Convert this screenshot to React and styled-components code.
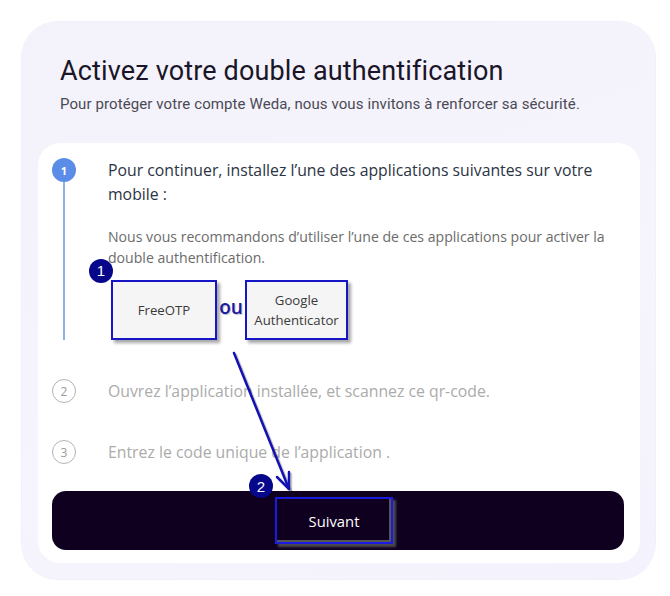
import styled, { createGlobalStyle } from "styled-components";

const GlobalStyle = createGlobalStyle`
  html, body {
    margin: 0;
    padding: 0;
    background: #ffffff;
  }
  * {
    box-sizing: border-box;
  }
`;

const Page = styled.div`
  position: relative;
  width: 670px;
  height: 596px;
  padding: 22px 0 0 22px;
  font-family: "Open Sans", "Liberation Sans", sans-serif;
`;

const Card = styled.div`
  width: 633px;
  padding: 0 15px 16px 16px;
  border-radius: 36px;
  background: linear-gradient(160deg, #f3f1f9 0%, #f6f4fc 60%, #f4f3fd 100%);
  box-shadow: 0 0 0 1px #f1effa;
`;

const Header = styled.div`
  padding: 31px 0 26px 22px;
`;

const Title = styled.h1`
  margin: 0;
  font-family: Roboto, "Liberation Sans", sans-serif;
  font-weight: 400;
  font-size: 27px;
  line-height: 36px;
  letter-spacing: 0.15px;
  color: #1a1528;
`;

const Subtitle = styled.p`
  margin: 2px 0 0;
  font-family: Roboto, "Liberation Sans", sans-serif;
  font-size: 15px;
  line-height: 26px;
  letter-spacing: 0.1px;
  color: #4a4a55;
`;

const Panel = styled.div`
  background: #ffffff;
  border-radius: 22px;
  padding: 15px 16px 13px 14px;
`;

const Step = styled.div`
  display: grid;
  grid-template-columns: 24px 1fr;
  column-gap: 32px;
  padding-bottom: ${(p) => p.$gap}px;
`;

const Rail = styled.div`
  display: flex;
  flex-direction: column;
  align-items: center;
`;

const Dot = styled.div`
  width: 24px;
  height: 24px;
  border-radius: 50%;
  display: flex;
  align-items: center;
  justify-content: center;
  font-size: ${(p) => (p.$active ? "11px" : "12px")};
  font-weight: ${(p) => (p.$active ? 700 : 400)};
  background: ${(p) => (p.$active ? "#5b8de6" : "#ffffff")};
  color: ${(p) => (p.$active ? "#ffffff" : "#9a9a9a")};
  border: ${(p) => (p.$active ? "none" : "1.6px solid #b3b3b3")};
`;

const Line = styled.div`
  width: 2px;
  flex: 1;
  background: #8fb0ec;
`;

const StepText = styled.div`
  font-size: 15.8px;
  line-height: 24px;
  color: ${(p) => (p.$muted ? "#ababab" : "#2b3444")};
`;

const Hint = styled.p`
  margin: 20px 0 0;
  font-size: 14.1px;
  line-height: 21px;
  color: #6b6b6b;
`;

const Apps = styled.div`
  display: flex;
  align-items: center;
  margin-top: 12px;
  margin-left: 3px;
`;

const AppBox = styled.div`
  position: relative;
  width: ${(p) => p.$w}px;
  height: 60px;
  display: flex;
  align-items: center;
  justify-content: center;
  text-align: center;
  background: #f5f5f5;
  border: 2.5px solid #1616c4;
  box-shadow: 3px 3px 3px rgba(0, 0, 0, 0.35);
  font-size: 13.2px;
  line-height: 20px;
  color: #3a3a3a;
`;

const Or = styled.span`
  width: 28px;
  text-align: center;
  font-size: 19px;
  font-weight: 600;
  color: #1a1aa8;
  text-shadow: 1px 1px 1px rgba(0, 0, 0, 0.25);
  padding-bottom: 6px;
`;

const Badge = styled.div`
  position: absolute;
  top: ${(p) => p.$top}px;
  left: ${(p) => p.$left}px;
  width: 24px;
  height: 24px;
  border-radius: 50%;
  background: #07078c;
  color: #ffffff;
  display: flex;
  align-items: center;
  justify-content: center;
  font-family: "Liberation Sans", sans-serif;
  font-size: 15px;
  z-index: 2;
`;

const Bar = styled.div`
  height: 59px;
  border-radius: 14px;
  background: #0f0020;
  display: flex;
  align-items: center;
  justify-content: center;
  padding-right: 8px;
`;

const NextButton = styled.button`
  position: relative;
  width: 118px;
  height: 47px;
  background: #0f0020;
  border: 2px solid #1a1ae0;
  box-shadow: inset -2px -2px 0 #555, 3px 3px 2px rgba(90, 90, 90, 0.8);
  color: #ffffff;
  font-family: "Open Sans", "Liberation Sans", sans-serif;
  font-size: 14.8px;
  cursor: pointer;
`;

const ArrowLayer = styled.svg`
  position: absolute;
  left: 0;
  top: 0;
  pointer-events: none;
  z-index: 3;
`;

export default function App() {
  return (
    <>
      <GlobalStyle />
      <Page>
        <Card>
          <Header>
            <Title>Activez votre double authentification</Title>
            <Subtitle>
              Pour protéger votre compte Weda, nous vous invitons à renforcer sa
              sécurité.
            </Subtitle>
          </Header>
          <Panel>
            <Step $gap={39}>
              <Rail>
                <Dot $active>1</Dot>
                <Line />
              </Rail>
              <div>
                <StepText>
                  Pour continuer, installez l’une des applications suivantes sur
                  votre mobile :
                </StepText>
                <Hint>
                  Nous vous recommandons d’utiliser l’une de ces applications
                  pour activer la double authentification.
                </Hint>
                <Apps>
                  <AppBox $w={106}>
                    <Badge $top={-23} $left={-24}>1</Badge>
                    FreeOTP
                  </AppBox>
                  <Or>ou</Or>
                  <AppBox $w={103}>
                    Google
                    <br />
                    Authenticator
                  </AppBox>
                </Apps>
              </div>
            </Step>
            <Step $gap={37}>
              <Rail>
                <Dot>2</Dot>
              </Rail>
              <StepText $muted>
                Ouvrez l’application installée, et scannez ce qr-code.
              </StepText>
            </Step>
            <Step $gap={27}>
              <Rail>
                <Dot>3</Dot>
              </Rail>
              <StepText $muted>Entrez le code unique de l’application .</StepText>
            </Step>
            <Bar>
              <NextButton>
                <Badge $top={-25} $left={-28}>2</Badge>
                Suivant
              </NextButton>
            </Bar>
          </Panel>
        </Card>
        <ArrowLayer width="670" height="596" viewBox="0 0 670 596">
          <g
            transform="translate(2 2)"
            stroke="rgba(0,0,0,0.22)"
            strokeWidth="2.5"
            fill="none"
            strokeLinecap="round"
          >
            <line x1="234" y1="353" x2="289" y2="489" />
            <polyline points="277,477 289,489 289,472" />
          </g>
          <g
            stroke="#1212b4"
            strokeWidth="2.5"
            fill="none"
            strokeLinecap="round"
            strokeLinejoin="round"
          >
            <line x1="234" y1="353" x2="289" y2="489" />
            <polyline points="277,477 289,489 289,472" />
          </g>
        </ArrowLayer>
      </Page>
    </>
  );
}
